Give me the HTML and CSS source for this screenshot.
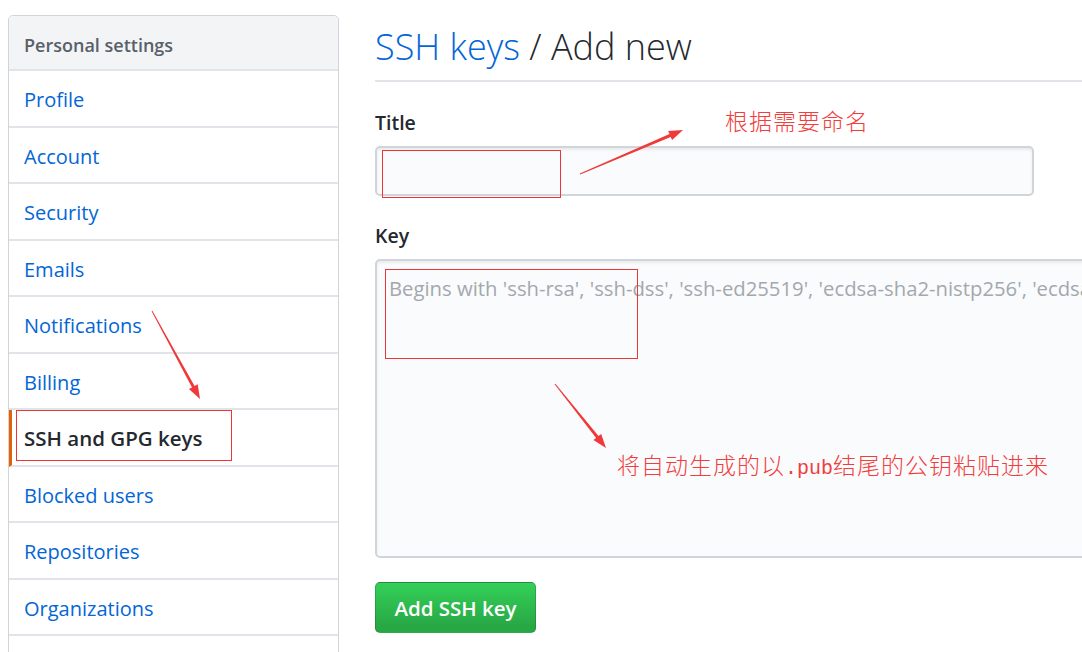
FILE: index.html
```html
<!DOCTYPE html>
<html lang="en">
<head>
<meta charset="utf-8">
<title>SSH keys / Add new</title>
<link rel="stylesheet" href="styles.css">
</head>
<body>
<div class="page">
  <nav class="menu">
    <div class="menu-heading">Personal settings</div>
    <a class="menu-item" href="#">Profile</a>
    <a class="menu-item" href="#">Account</a>
    <a class="menu-item" href="#">Security</a>
    <a class="menu-item" href="#">Emails</a>
    <a class="menu-item" href="#">Notifications</a>
    <a class="menu-item" href="#">Billing</a>
    <a class="menu-item selected" href="#">SSH and GPG keys</a>
    <a class="menu-item" href="#">Blocked users</a>
    <a class="menu-item" href="#">Repositories</a>
    <a class="menu-item" href="#">Organizations</a>
    <span class="menu-item menu-tail"></span>
  </nav>
  <main class="content">
    <h2 class="subhead"><a class="subhead-link" href="#">SSH keys</a> / Add new</h2>
    <form class="key-form">
      <label class="form-label" for="title">Title</label>
      <input class="form-input" id="title" type="text">
      <label class="form-label key-label" for="key">Key</label>
      <textarea class="form-textarea" id="key" placeholder="Begins with 'ssh-rsa', 'ssh-dss', 'ssh-ed25519', 'ecdsa-sha2-nistp256', 'ecdsa-sha2-nistp384', or 'ecdsa-sha2-nistp521'"></textarea>
      <button class="btn-primary" type="button">Add SSH key</button>
    </form>
  </main>
</div>

<svg class="marks" width="1082" height="652" viewBox="0 0 1082 652">
  <rect x="16.5" y="410.5" width="215" height="50" fill="none" stroke="#ee3535" stroke-width="1"/>
  <rect x="382.5" y="150.5" width="178" height="47" fill="none" stroke="#ee3535" stroke-width="1"/>
  <rect x="385.5" y="269.5" width="252" height="89" fill="none" stroke="#ee3535" stroke-width="1"/>
  <polygon fill="#f03a3a" points="151.6,311.2 192.0,387.4 188.9,389.1 200,399 197.7,384.3 194.6,386.0 152.4,310.8"/>
  <polygon fill="#f03a3a" points="580.2,174.5 670.7,136.9 672.1,140.1 683,130 668.1,130.9 669.5,134.1 579.8,173.5"/>
  <polygon fill="#f03a3a" points="554.6,384.3 596.1,437.9 593.4,440.1 606,448 601.2,433.9 598.5,436.1 555.4,383.7"/>
</svg>
<div class="note note-title">根据需要命名</div>
<div class="note note-key">将自动生成的以<span class="note-latin">.pub</span>结尾的公钥粘贴进来</div>
</body>
</html>
```
FILE: styles.css
```css
html, body {
  margin: 0;
  padding: 0;
  background: #fff;
  overflow: hidden;
}
body {
  width: 1082px;
  height: 652px;
  position: relative;
  font-family: "Open Sans", "Noto Sans", sans-serif;
  color: #24292e;
}
.page {
  display: flex;
  align-items: flex-start;
  padding: 15px 0 0 8px;
  gap: 36px;
  height: 637px;
  overflow: hidden;
}
.menu {
  width: 329px;
  flex: none;
  border: 1px solid #d1d5da;
  border-radius: 5px;
  background: #fff;
  display: flex;
  flex-direction: column;
}
.menu-heading {
  height: 55px;
  box-sizing: border-box;
  padding: 17px 15px 0 15px;
  background: #f3f4f6;
  border-bottom: 2px solid #e1e4e8;
  border-radius: 5px 5px 0 0;
  font-size: 18px;
  font-weight: 600;
  color: #586069;
  line-height: 24px;
}
.menu-item {
  display: block;
  height: 56.5px;
  box-sizing: border-box;
  padding: 16px 15px 0 15px;
  border-bottom: 2px solid #e1e4e8;
  font-size: 20px;
  line-height: 25px;
  color: #0366d6;
  text-decoration: none;
}
.menu-item.selected {
  color: #24292e;
  font-weight: 600;
  font-size: 20.5px;
  border-left: 3px solid #e36209;
  padding-left: 12px;
}
.content {
  flex: none;
  width: 900px;
}
.subhead {
  margin: 0;
  height: 67px;
  box-sizing: border-box;
  padding-top: 10px;
  border-bottom: 2px solid #e1e4e8;
  font-size: 36px;
  font-weight: 300;
  line-height: 44px;
  color: #24292e;
}
.subhead-link {
  color: #0366d6;
  text-decoration: none;
}
.key-form {
  display: flex;
  flex-direction: column;
  align-items: flex-start;
  padding-top: 28px;
}
.form-label {
  font-size: 19.5px;
  font-weight: 600;
  line-height: 26px;
  color: #24292e;
}
.form-input {
  margin-top: 10px;
  width: 659px;
  height: 50px;
  box-sizing: border-box;
  border: 2px solid #d1d5da;
  border-radius: 5px;
  background: #fafbfc;
  box-shadow: inset 0 2px 3px rgba(27, 31, 35, 0.075);
  font-family: inherit;
  font-size: 19.5px;
  padding: 0 12px;
  outline: none;
}
.key-label {
  margin-top: 27px;
}
.form-textarea {
  margin-top: 10px;
  width: 900px;
  height: 299px;
  box-sizing: border-box;
  border: 2px solid #d1d5da;
  border-radius: 5px;
  background: #fafbfc;
  box-shadow: inset 0 2px 3px rgba(27, 31, 35, 0.075);
  font-family: inherit;
  font-size: 20.3px;
  line-height: 28px;
  padding: 13px 12px;
  resize: none;
  outline: none;
  white-space: nowrap;
  overflow: hidden;
}
.form-textarea::placeholder {
  color: #a3a8ae;
}
.btn-primary {
  margin-top: 24px;
  width: 161px;
  height: 51px;
  border: 1px solid rgba(27, 31, 35, 0.2);
  border-radius: 5px;
  background: linear-gradient(#34d058, #28a745 90%);
  color: #fff;
  font-family: inherit;
  font-size: 20.5px;
  font-weight: 600;
  padding: 0;
}
.marks {
  position: absolute;
  left: 0;
  top: 0;
  pointer-events: none;
}
.note {
  position: absolute;
  font-family: "Noto Sans CJK SC", sans-serif;
  font-size: 23px;
  font-weight: 300;
  line-height: 30px;
  color: #f23d3d;
  white-space: nowrap;
  letter-spacing: 1px;
}
.note-title {
  left: 725px;
  top: 105px;
}
.note-key {
  left: 617px;
  top: 449px;
}
.note-latin {
  font-family: "Liberation Mono", monospace;
  font-size: 20px;
  letter-spacing: 0;
}
```
